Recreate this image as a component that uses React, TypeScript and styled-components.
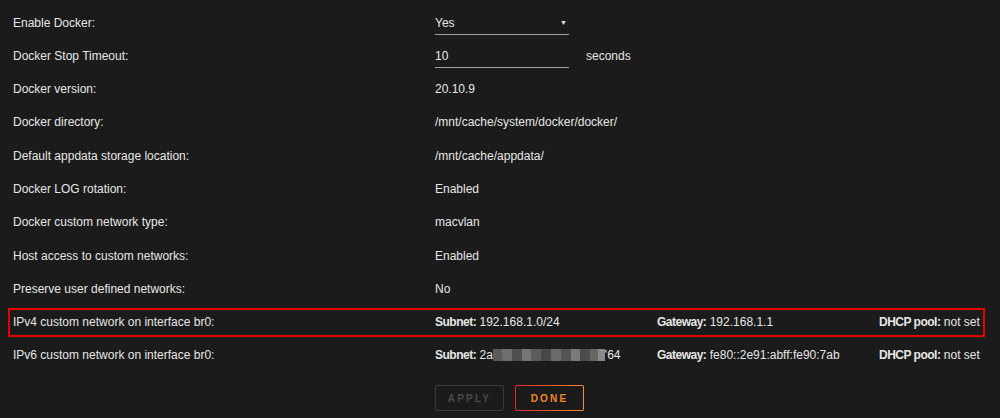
import React from 'react'
import styled, { createGlobalStyle } from 'styled-components'

const GlobalStyle = createGlobalStyle`
  body {
    margin: 0;
    background: #1c1b1b;
    color: #e6e6e6;
    font-family: "Liberation Sans", Arial, sans-serif;
    font-size: 12px;
  }
`

const Page = styled.div`
  width: 1000px;
  height: 418px;
  box-sizing: border-box;
  padding: 8px 15px 0 8px;
  display: flex;
  flex-direction: column;
  gap: 4.3px;
`

const Row = styled.div<{ $hl?: boolean }>`
  height: 29px;
  box-sizing: border-box;
  display: grid;
  grid-template-columns: 422px 1fr;
  align-items: center;
  padding-left: 3px;
  white-space: nowrap;
  border: 2px solid ${p => (p.$hl ? '#e50000' : 'transparent')};
`

const Label = styled.div``

const Value = styled.div`
  display: flex;
  align-items: center;
`

const Select = styled.div`
  width: 134px;
  height: 22px;
  box-sizing: border-box;
  border-bottom: 1px solid #a0a0a0;
  display: flex;
  align-items: center;
  justify-content: space-between;
  padding: 0 2px 2px 0;
  margin-top: 3px;
`

const Caret = styled.span`
  font-size: 7px;
`

const Input = styled.div`
  width: 134px;
  height: 22px;
  box-sizing: border-box;
  border-bottom: 1px solid #a0a0a0;
  display: flex;
  align-items: center;
  padding-bottom: 2px;
  margin-top: 3px;
`

const Unit = styled.span`
  margin-left: 17px;
`

const NetGrid = styled.div`
  display: grid;
  grid-template-columns: 222px 222px 1fr;
  align-items: center;
`

const Key = styled.b`
  font-weight: 700;
  letter-spacing: -0.5px;
`

const Mosaic = styled.span`
  display: inline-block;
  width: 112px;
  height: 12px;
  vertical-align: -2px;
  background:
    linear-gradient(90deg, #5a5a5a 0 8%, #6e6e6e 8% 17%, #505050 17% 26%, #767676 26% 34%, #5c5c5c 34% 43%, #484848 43% 52%, #6a6a6a 52% 61%, #545454 61% 70%, #7a7a7a 70% 78%, #4c4c4c 78% 87%, #666 87% 94%, #8a8a8a 94% 100%);
`

const Buttons = styled.div`
  display: flex;
  gap: 11px;
  padding-left: 427px;
  margin-top: 11px;
`

const Button = styled.div<{ $primary?: boolean }>`
  width: 69px;
  height: 26px;
  box-sizing: border-box;
  display: flex;
  align-items: center;
  justify-content: center;
  border-radius: 2px;
  font-size: 10px;
  font-weight: 700;
  letter-spacing: 2.2px;
  border: 1px solid ${p => (p.$primary ? 'transparent' : '#3a3a3a')};
  color: ${p => (p.$primary ? '#f0862e' : '#4a4a4a')};
  ${p =>
    p.$primary &&
    `background: linear-gradient(#1c1b1b, #1c1b1b) padding-box, linear-gradient(90deg, #e22828, #ff8c2f) border-box;`}
`

const rows: [string, string][] = [
  ['Docker version:', '20.10.9'],
  ['Docker directory:', '/mnt/cache/system/docker/docker/'],
  ['Default appdata storage location:', '/mnt/cache/appdata/'],
  ['Docker LOG rotation:', 'Enabled'],
  ['Docker custom network type:', 'macvlan'],
  ['Host access to custom networks:', 'Enabled'],
  ['Preserve user defined networks:', 'No'],
]

export default function App() {
  return (
    <>
      <GlobalStyle />
      <Page>
        <Row>
          <Label>Enable Docker:</Label>
          <Value>
            <Select>
              <span>Yes</span>
              <Caret>▼</Caret>
            </Select>
          </Value>
        </Row>
        <Row>
          <Label>Docker Stop Timeout:</Label>
          <Value>
            <Input>10</Input>
            <Unit>seconds</Unit>
          </Value>
        </Row>
        {rows.map(([l, v]) => (
          <Row key={l}>
            <Label>{l}</Label>
            <Value>{v}</Value>
          </Row>
        ))}
        <Row $hl>
          <Label>IPv4 custom network on interface br0:</Label>
          <NetGrid>
            <span><Key>Subnet:</Key> 192.168.1.0/24</span>
            <span><Key>Gateway:</Key> 192.168.1.1</span>
            <span><Key>DHCP pool:</Key> not set</span>
          </NetGrid>
        </Row>
        <Row>
          <Label>IPv6 custom network on interface br0:</Label>
          <NetGrid>
            <span><Key>Subnet:</Key> 2a<Mosaic />'64</span>
            <span><Key>Gateway:</Key> fe80::2e91:abff:fe90:7ab</span>
            <span><Key>DHCP pool:</Key> not set</span>
          </NetGrid>
        </Row>
        <Buttons>
          <Button>APPLY</Button>
          <Button $primary>DONE</Button>
        </Buttons>
      </Page>
    </>
  )
}
